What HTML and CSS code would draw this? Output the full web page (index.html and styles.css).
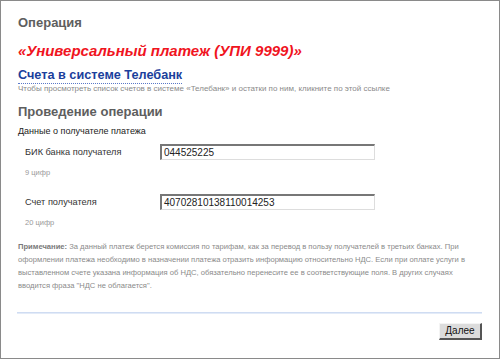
FILE: index.html
```html
<!DOCTYPE html>
<html>
<head>
<meta charset="utf-8">
<link rel="stylesheet" href="styles.css">
</head>
<body>
<div class="frame">
  <h1 class="op">Операция</h1>
  <h2 class="title">«Универсальный платеж (УПИ 9999)»</h2>
  <a class="acc" href="#">Счета в системе Телебанк</a>
  <p class="hint">Чтобы просмотреть список счетов в системе «Телебанк» и остатки по ним, кликните по этой ссылке</p>
  <h1 class="sec">Проведение операции</h1>
  <p class="sub">Данные о получателе платежа</p>
  <div class="field">
    <div class="row"><span class="lbl">БИК банка получателя</span><span class="inp">044525225</span></div>
    <div class="note9">9 цифр</div>
  </div>
  <div class="field">
    <div class="row"><span class="lbl">Счет получателя</span><span class="inp">40702810138110014253</span></div>
    <div class="note9">20 цифр</div>
  </div>
  <p class="remark"><b>Примечание:</b> За данный платеж берется комиссия по тарифам, как за перевод в пользу получателей в третьих банках. При оформлении платежа необходимо в назначении платежа отразить информацию относительно НДС. Если при оплате услуги в выставленном счете указана информация об НДС, обязательно перенесите ее в соответствующие поля. В других случаях вводится фраза "НДС не облагается".</p>
  <div class="rule"></div>
  <div class="actions"><span class="btn">Далее</span></div>
</div>
</body>
</html>
```
FILE: styles.css
```css
html, body { margin: 0; padding: 0; background: #fff; }
.frame {
  box-sizing: border-box;
  width: 500px;
  height: 359px;
  border: 1px solid #8a8a8a;
  padding: 0 17px 0 16px;
  font-family: "Liberation Sans", Arial, sans-serif;
  display: flex;
  flex-direction: column;
}
.op {
  margin: 14px 0 0 1px;
  font-size: 13px;
  line-height: 15px;
  color: #5e5e5e;
  font-weight: bold;
}
.title {
  margin: 12px 0 0 1px;
  font-size: 15px;
  line-height: 18px;
  font-style: italic;
  font-weight: bold;
  color: #f0141e;
}
.acc {
  align-self: flex-start;
  margin: 8px 0 0 1px;
  font-size: 12.7px;
  line-height: 15px;
  font-weight: bold;
  color: #1b3f9c;
  text-decoration: none;
  border-bottom: 1px dotted #5a78c8;
}
.hint {
  margin: 0 0 0 1px;
  font-size: 8px;
  line-height: 10px;
  color: #8a8a8a;
}
.sec {
  margin: 10px 0 0 1px;
  font-size: 13px;
  line-height: 16px;
  color: #5e5e5e;
  font-weight: bold;
}
.sub {
  margin: 6px 0 0 1px;
  font-size: 9px;
  line-height: 11px;
  color: #222;
}
.field { padding-left: 8px; }
.row {
  display: flex;
  align-items: center;
  margin-top: 6px;
  height: 17px;
}
.lbl {
  width: 135px;
  font-size: 9.2px;
  color: #333;
}
.inp {
  box-sizing: border-box;
  width: 215px;
  height: 16px;
  border-top: 2px solid #777;
  border-left: 2px solid #777;
  border-right: 1px solid #ddd;
  border-bottom: 1px solid #ddd;
  padding: 0 0 0 2px;
  font-size: 10px;
  line-height: 13px;
  color: #222;
}
.note9 {
  margin-top: 8px;
  font-size: 7.5px;
  line-height: 10px;
  color: #999;
}
.field + .field .row { margin-top: 15px; }
.remark {
  margin: 12px 0 0 1px;
  font-size: 7.6px;
  line-height: 13px;
  color: #8a8a8a;
}
.remark b { color: #7a7a7a; }
.rule {
  margin-top: 20px;
  height: 1px;
  background: #cfdcf2;
  border-bottom: 1px solid #e3ebf8;
}
.actions {
  display: flex;
  justify-content: flex-end;
  margin-top: 9px;
}
.btn {
  box-sizing: border-box;
  width: 43px;
  height: 17px;
  background: #dcdcdc;
  border-top: 1px solid #f4f4f4;
  border-left: 1px solid #f4f4f4;
  border-right: 2px solid #555;
  border-bottom: 2px solid #555;
  font-size: 10px;
  line-height: 14px;
  text-align: center;
  color: #111;
}
```
